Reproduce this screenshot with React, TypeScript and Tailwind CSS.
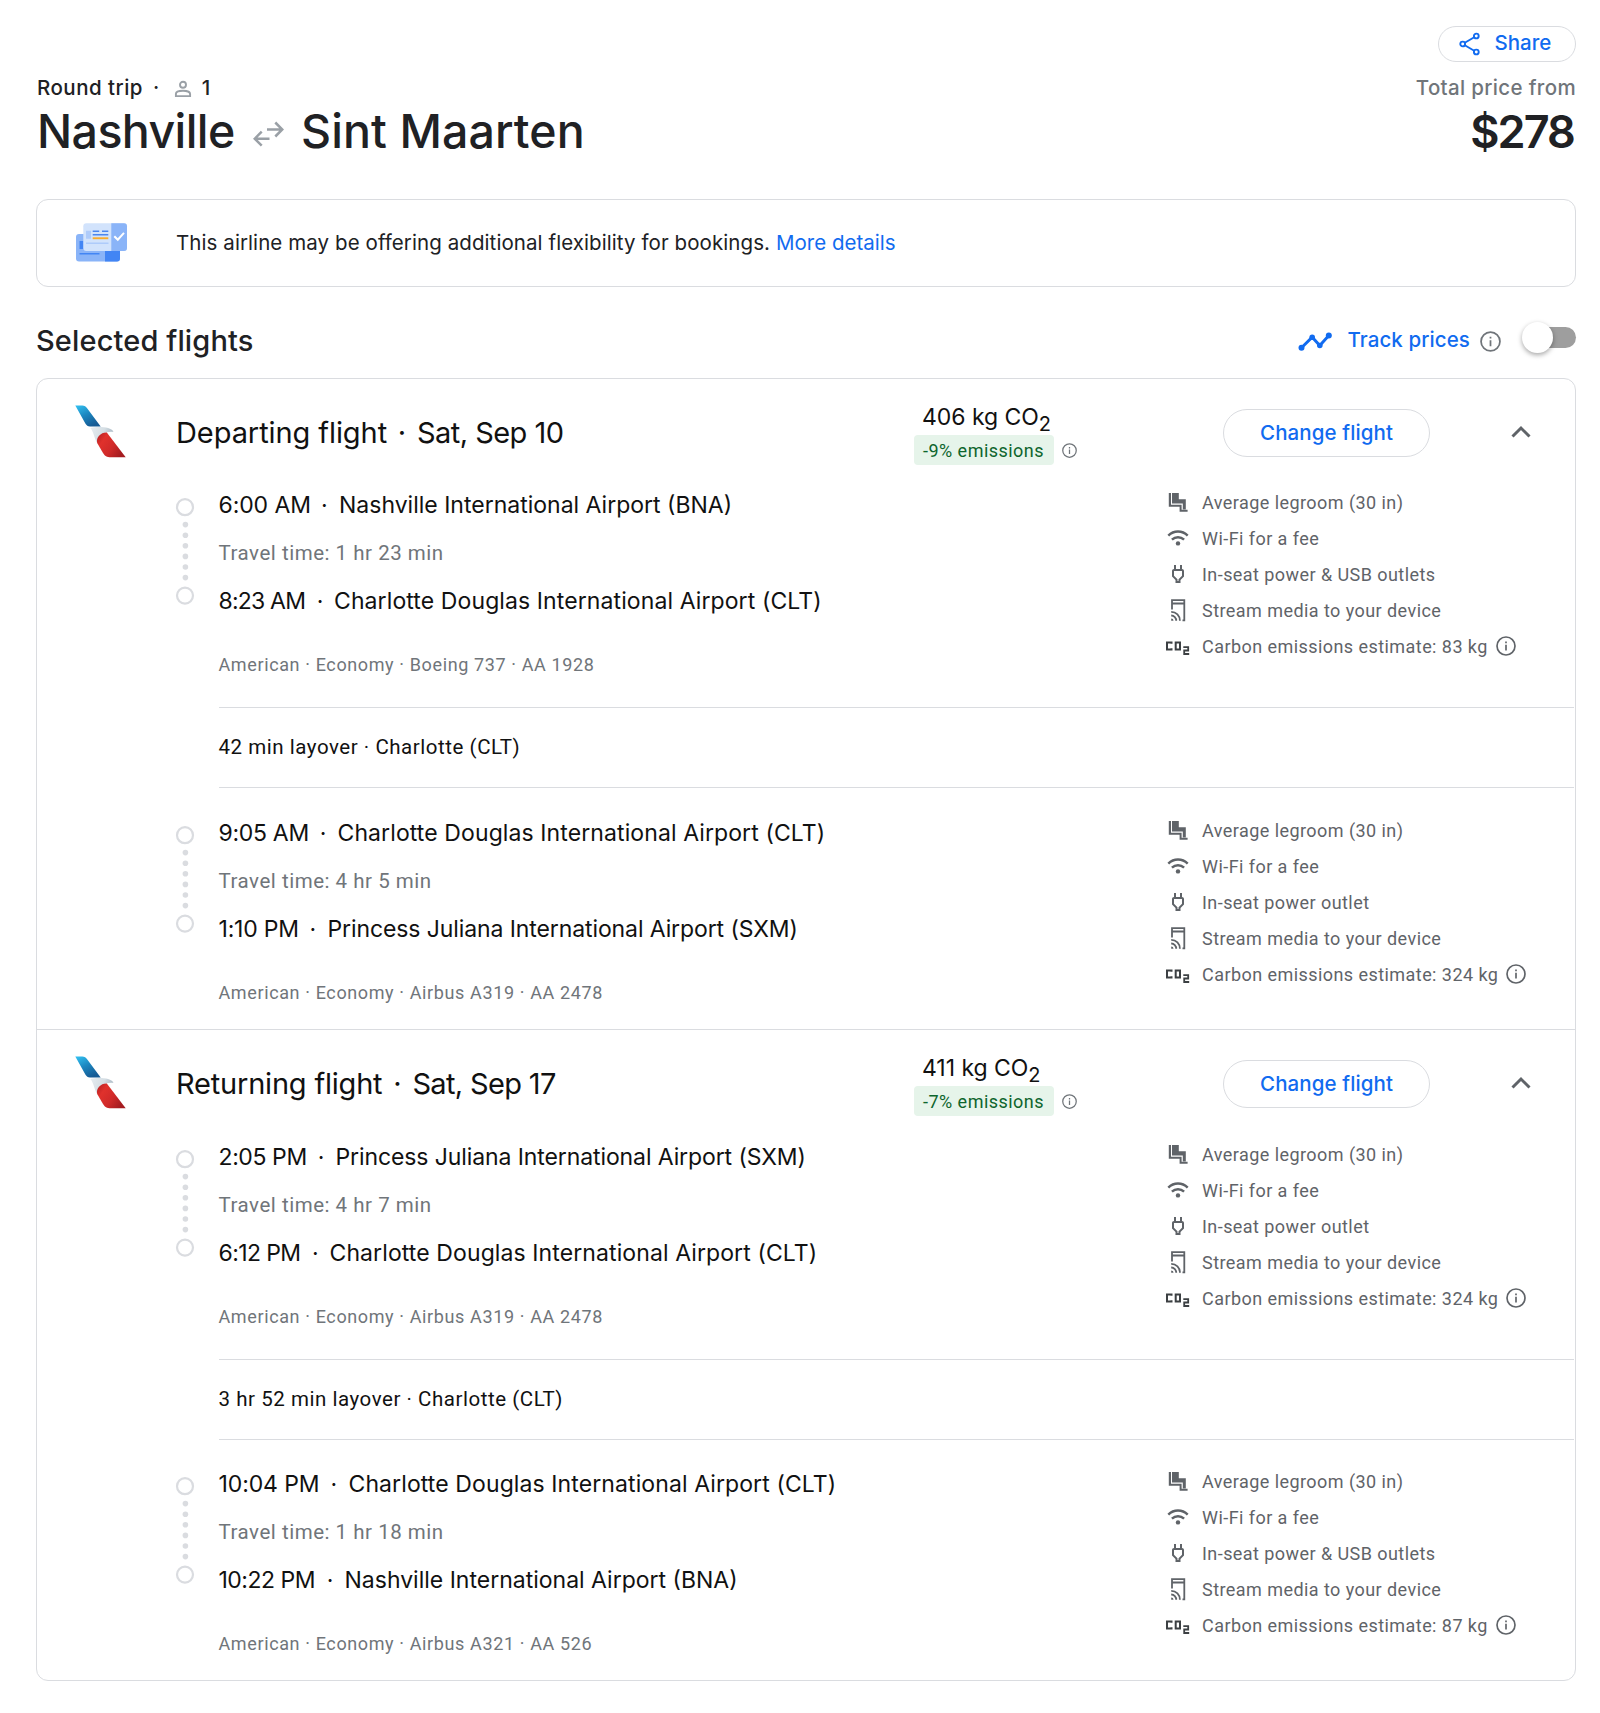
import React from 'react';

type Leg = {
  dep: string;
  depW: string;
  from: string;
  fromT: string;
  travel: string;
  arr: string;
  arrW: string;
  to: string;
  toT: string;
  plane: string;
  outlet: string;
  carbon: string;
  box: string;
};

type Trip = { title: string; titleT: string; date: string; dateT: string; co2: string; diff: string; layover: string; legs: Leg[] };

const BNA = 'Nashville International Airport (BNA)';
const CLT = 'Charlotte Douglas International Airport (CLT)';
const SXM = 'Princess Juliana International Airport (SXM)';
const T_BNA = 'tracking-[0px]';
const T_CLT = 'tracking-[0.1px]';
const T_SXM = 'tracking-[-0.1px]';

const trips: Trip[] = [
  {
    title: 'Departing flight',
    titleT: 'tracking-[-0.08px]',
    date: 'Sat, Sep 10',
    dateT: 'tracking-[-0.55px]',
    co2: '406 kg CO',
    diff: '-9% emissions',
    layover: '42 min layover · Charlotte (CLT)',
    legs: [
      { dep: '6:00 AM', depW: 'w-[120.5px] tracking-[-0.1px]', from: BNA, fromT: T_BNA, travel: 'Travel time: 1 hr 23 min', arr: '8:23 AM', arrW: 'w-[115.5px] tracking-[-0.8px]', to: CLT, toT: T_CLT, plane: 'American · Economy · Boeing 737 · AA 1928', outlet: 'In-seat power & USB outlets', carbon: 'Carbon emissions estimate: 83 kg', box: 'h-[222px]' },
      { dep: '9:05 AM', depW: 'w-[119px] tracking-[-0.3px]', from: CLT, fromT: T_CLT, travel: 'Travel time: 4 hr 5 min', arr: '1:10 PM', arrW: 'w-[109px] tracking-[-0.2px]', to: SXM, toT: T_SXM, plane: 'American · Economy · Airbus A319 · AA 2478', outlet: 'In-seat power outlet', carbon: 'Carbon emissions estimate: 324 kg', box: 'h-[241px] pt-[25px]' },
    ],
  },
  {
    title: 'Returning flight',
    titleT: 'tracking-[-0.2px]',
    date: 'Sat, Sep 17',
    dateT: 'tracking-[-0.65px]',
    co2: '411 kg CO',
    diff: '-7% emissions',
    layover: '3 hr 52 min layover · Charlotte (CLT)',
    legs: [
      { dep: '2:05 PM', depW: 'w-[117px] tracking-[-0.4px]', from: SXM, fromT: T_SXM, travel: 'Travel time: 4 hr 7 min', arr: '6:12 PM', arrW: 'w-[111px] tracking-[-0.6px]', to: CLT, toT: T_CLT, plane: 'American · Economy · Airbus A319 · AA 2478', outlet: 'In-seat power outlet', carbon: 'Carbon emissions estimate: 324 kg', box: 'h-[223px] pt-px' },
      { dep: '10:04 PM', depW: 'w-[130px] tracking-[-0.1px]', from: CLT, fromT: T_CLT, travel: 'Travel time: 1 hr 18 min', arr: '10:22 PM', arrW: 'w-[126px] tracking-[-0.5px]', to: BNA, toT: T_BNA, plane: 'American · Economy · Airbus A321 · AA 526', outlet: 'In-seat power & USB outlets', carbon: 'Carbon emissions estimate: 87 kg', box: 'h-[240px] pt-[24px]' },
    ],
  },
];

function Info({ className }: { className: string }) {
  return (
    <svg viewBox="0 0 24 24" fill="none" className={className}>
      <circle cx="12" cy="12" r="10.8" stroke="currentColor" strokeWidth="2" />
      <path d="M11 10.5h2v7h-2zM11 6.5h2v2.2h-2z" fill="currentColor" />
    </svg>
  );
}

function AirlineLogo() {
  return (
    <svg width="52" height="54" viewBox="0 0 52 54">
      <defs>
        <linearGradient id="tailBlue" x1="0" y1="0" x2="0.6" y2="1">
          <stop offset="0" stopColor="#33c3f3" />
          <stop offset="0.5" stopColor="#1c87c0" />
          <stop offset="1" stopColor="#155a94" />
        </linearGradient>
        <linearGradient id="tailRed" x1="0" y1="0" x2="1" y2="0.6">
          <stop offset="0" stopColor="#b01d22" />
          <stop offset="0.3" stopColor="#e0312c" />
          <stop offset="0.65" stopColor="#d02a29" />
          <stop offset="1" stopColor="#a51c20" />
        </linearGradient>
        <linearGradient id="tailGrey" x1="0" y1="0" x2="1" y2="0.3">
          <stop offset="0" stopColor="#e6ecf0" />
          <stop offset="0.6" stopColor="#d5dee4" />
          <stop offset="1" stopColor="#a9b9c4" />
        </linearGradient>
      </defs>
      <path d="M.3 .4H7.2C9.6 .4 11 1.4 12.3 3.4L25.7 21.6H15C12.8 21.6 11.5 20.4 10.5 18.8L.3 .4Z" fill="url(#tailBlue)" />
      <path d="M15.3 23C22 21.400 36 21.400 38.500 26.800C33 26.300 29 27.500 26 30.500C23.500 33 22.600 35 22.500 38.500C19 33 18.500 26 15.3 23Z" fill="url(#tailGrey)" />
      <path d="M22.2 38C20.6 32.500 26 27.300 31.800 27.600L50.7 52.2H36C31.5 52.2 30 51 28 48L22.2 38Z" fill="url(#tailRed)" />
    </svg>
  );
}

function TicketArt() {
  return (
    <svg width="54" height="44" viewBox="0 0 54 44">
      <rect x="1" y="13" width="44" height="27.5" rx="3" fill="#8ab4f8" />
      <path d="M30 25H45V37.5a3 3 0 0 1-3 3H30Z" fill="#4285f4" />
      <path d="M4.5 20h4v8h-4zM4.5 32h20v1.4h-20z" fill="#4285f4" />
      <rect x="8.3" y="2.3" width="43.7" height="27.7" rx="3" fill="#d2e3fc" />
      <path d="M36.3 2.3H49a3 3 0 0 1 3 3V27a3 3 0 0 1-3 3H36.3Z" fill="#8ab4f8" />
      <path d="M11 9.8h5v8h-5zM11 21.5h22.5v1.4H11z" fill="#aecbfa" />
      <path d="M17.7 9.6h6.5V11h-6.5zM27 9.6h6.3V11H27zM17.7 13h15.6v1.5H17.7z" fill="#4c86ee" />
      <path d="M17.7 16.3h15.6v1.9H17.7z" fill="#f9ab2d" />
      <path d="M39.3 15.2 42.8 18.7 49 11.8" fill="none" stroke="#fff" strokeWidth="2" />
    </svg>
  );
}

function SeatIcon() {
  return (
    <svg width="24" height="24" viewBox="0 0 24 24" fill="#5f6368">
      <path d="M6 3h6.800v6.300h7v10.200h-3V13.500H6Z" />
      <path d="M2.800 3h2.200v11.700h10.600v5.100h6v2H13.600V16.700H2.800Z" />
    </svg>
  );
}

function WifiIcon() {
  return (
    <svg width="24" height="24" viewBox="0 0 24 24" fill="none" stroke="#5f6368" strokeWidth="2.5">
      <path d="M2.3 9.7C7.9 4.2 16.1 4.2 21.7 9.7" />
      <path d="M5.9 13.7C9.5 10.3 14.5 10.3 18.1 13.7" />
      <circle cx="12" cy="17.4" r="2.2" fill="#5f6368" stroke="none" />
    </svg>
  );
}

function PlugIcon() {
  return (
    <svg width="24" height="24" viewBox="0 0 24 24" fill="#5f6368">
      <path d="M16 9v4.66l-3.5 3.51V19h-1v-1.83L8 13.65V9h8m0-6h-2v4h-4V3H8v4h-.01C6.9 6.99 6 7.89 6 8.99v5.49L9.5 18v3h5v-3l3.5-3.51V9c0-1.1-.9-2-2-2V3z" />
    </svg>
  );
}

function StreamIcon() {
  return (
    <svg width="24" height="24" viewBox="0 0 24 24" fill="none" stroke="#5f6368" strokeWidth="1.8">
      <path d="M6 11.5V2.2H18.3V22.3H16.5M6 5.5H18.3" />
      <path d="M5.2 13.8A8.7 8.7 0 0 1 13.9 22.8M5.2 17.5A5 5 0 0 1 10.2 22.8" />
      <path d="M5.2 20.5A2.3 2.3 0 0 1 7.5 22.8H5.2Z" fill="#5f6368" stroke="none" />
    </svg>
  );
}

function Co2Icon() {
  return (
    <svg width="24" height="24" viewBox="0 0 24 24" fill="none" stroke="#3c4043" strokeWidth="2">
      <path d="M5.500 9.8V8.5H1V15.5H5.500V14.2" />
      <path d="M9.7 8.5H14V15.5H9.7Z" />
      <path d="M17.300 13.2H22.2V16.5H18.2V20H23.2" strokeWidth="1.8" />
    </svg>
  );
}

function Amenity({ icon, children }: { icon: React.ReactNode; children: React.ReactNode }) {
  return (
    <li className="flex h-9 items-center gap-3 whitespace-nowrap font-[Roboto,sans-serif] text-[18px] tracking-[0.44px] text-[#5f6368]">
      {icon}
      {children}
    </li>
  );
}

function Stop({ time, width, place, track }: { time: string; width: string; place: string; track: string }) {
  return (
    <div className="flex items-center whitespace-nowrap text-[23px] text-[#111]">
      <span className={`flex justify-between pr-[11.5px] ${width}`}>
        <span>{time}</span>
        <span>·</span>
      </span>
      <span className={track}>{place}</span>
    </div>
  );
}

function LegRow({ leg }: { leg: Leg }) {
  return (
    <div className={`flex pl-[138px] ${leg.box}`}>
      <svg width="20" height="112" viewBox="0 0 20 112" fill="none" className="mt-3 shrink-0">
        <circle cx="10" cy="10.2" r="8" stroke="#dadce0" strokeWidth="2.2" />
        {[0, 1, 2, 3, 4, 5].map((i) => (
          <circle key={i} cx="10.4" cy={27.6 + i * 10.6} r="2.8" fill="#dadce0" />
        ))}
        <circle cx="10" cy="98.6" r="8" stroke="#dadce0" strokeWidth="2.2" />
      </svg>
      <div className="ml-[23.5px] flex-1">
        <div className="flex h-[41px] items-center">
          <Stop time={leg.dep} width={leg.depW} place={leg.from} track={leg.fromT} />
        </div>
        <div className="flex h-[55px] items-center font-[Roboto,sans-serif] text-[20.5px] tracking-[0.52px] text-[#70757a]">{leg.travel}</div>
        <div className="flex h-[41px] items-center">
          <Stop time={leg.arr} width={leg.arrW} place={leg.to} track={leg.toT} />
        </div>
        <div className="mt-[30px] flex h-[25px] items-center font-[Roboto,sans-serif] text-[18px] tracking-[0.62px] text-[#70757a]">{leg.plane}</div>
      </div>
      <ul className="-mt-px w-[409px] shrink-0">
        <Amenity icon={<SeatIcon />}>Average legroom (30 in)</Amenity>
        <Amenity icon={<WifiIcon />}>Wi-Fi for a fee</Amenity>
        <Amenity icon={<PlugIcon />}>{leg.outlet}</Amenity>
        <Amenity icon={<StreamIcon />}>Stream media to your device</Amenity>
        <Amenity icon={<Co2Icon />}>
          <span className="-mr-1">{leg.carbon}</span>
          <Info className="size-5 overflow-visible" />
        </Amenity>
      </ul>
    </div>
  );
}

function TripSection({ trip, last }: { trip: Trip; last: boolean }) {
  return (
    <section className={last ? '' : 'border-b border-[#dadce0]'}>
      <div className="flex h-[106px] items-center">
        <div className="w-[139px] shrink-0 pl-[38px]">
          <AirlineLogo />
        </div>
        <h3 className="flex w-[738px] shrink-0 whitespace-nowrap pt-px text-[29px] text-[#111]">
          <span className={trip.titleT}>{trip.title}</span>
          <span className="w-[30px] text-center">·</span>
          <span className={trip.dateT}>{trip.date}</span>
        </h3>
        <div className="w-[309px] shrink-0 self-start pt-5">
          <div className="flex h-9 items-center pl-2 text-[23px] tracking-[-0.05px] text-[#111]">
            {trip.co2}
            <span className="mt-3.5 text-[20px]">2</span>
          </div>
          <div className="flex items-center gap-2">
            <span className="flex h-[30px] w-[140px] items-center rounded bg-[#e6f4ea] pl-[9px] font-[Roboto,sans-serif] text-[18px] tracking-[0.47px] text-[#0d652d]">{trip.diff}</span>
            <Info className="size-[15px] overflow-visible text-[#70757a]" />
          </div>
        </div>
        <button className="mt-px h-12 w-[207px] shrink-0 rounded-full border border-[#dadce0] pt-px text-[20.5px] font-medium tracking-[0.1px] text-[#116bf0]">Change flight</button>
        <svg width="24" height="24" viewBox="0 0 24 24" fill="none" stroke="#5f6368" strokeWidth="3" className="ml-[79px]">
          <path d="M3.5 16.5 12 8 20.5 16.5" />
        </svg>
      </div>
      <LegRow leg={trip.legs[0]} />
      <div className="ml-[181.5px] mr-px flex h-[81px] items-center border-y border-[#dadce0] font-[Roboto,sans-serif] text-[20.5px] tracking-[0.54px] text-[#111]">{trip.layover}</div>
      <LegRow leg={trip.legs[1]} />
    </section>
  );
}

export default function App() {
  return (
    <main className="min-h-[1713px] bg-white pl-9 pr-6 font-[Inter,sans-serif] text-[#202124]">
      <div className="h-[199px] w-[1540px] pt-[26px]">
        <header className="flex justify-between">
          <div className="pt-[47px] pl-px">
            <div className="flex h-[30px] items-center text-[20.5px] font-medium tracking-[0.48px]">
              Round trip
              <span className="ml-[10px]">·</span>
              <svg width="18" height="18" viewBox="0 0 18 18" fill="none" stroke="#9aa0a6" strokeWidth="1.9" className="ml-[14px] mt-0.5">
                <circle cx="9" cy="4.7" r="3" />
                <path d="M1.9 16.1V14C1.9 9.7 16.1 9.7 16.1 14V16.1Z" />
              </svg>
              <span className="ml-[10px]">1</span>
            </div>
            <h1 className="flex h-[58px] items-center whitespace-nowrap text-[46.5px] font-medium">
              <span className="w-[216px] tracking-[-0.6px]">Nashville</span>
              <svg width="31" height="26" viewBox="0 0 31 26" fill="none" stroke="#9aa0a6" strokeWidth="2.5" className="mt-1 mr-[17px]">
                <path d="M14 8.5H29M22.3 1.5 29.3 8.5 22.3 15.5M16.5 17.7H2M8.7 10.7 1.7 17.7 8.7 24.7" />
              </svg>
              <span className="tracking-[0.1px]">Sint Maarten</span>
            </h1>
          </div>
          <div className="flex flex-col items-end">
            <button className="flex h-9 w-[138.5px] items-center rounded-full border border-[#dadce0] pl-5 text-[20.5px] font-medium text-[#116bf0]">
              <svg width="24" height="24" viewBox="0 0 24 24" fill="none" stroke="#116bf0" strokeWidth="1.9" className="mr-3">
                <circle cx="17.3" cy="4" r="2.4" />
                <circle cx="17.3" cy="20" r="2.4" />
                <circle cx="3.7" cy="12" r="2.4" />
                <path d="M15.2 5.2 5.8 10.8M15.2 18.8 5.8 13.2" />
              </svg>
              <span className="pb-0.5">Share</span>
            </button>
            <div className="mt-[11px] flex h-[30px] items-center text-[20.5px] font-medium tracking-[0.34px] text-[#70757a]">Total price from</div>
            <div className="mr-[2px] flex h-[58px] items-center text-[45px] font-semibold tracking-[-1.9px]">$278</div>
          </div>
        </header>
      </div>

      <div className="flex h-[88px] w-[1540px] items-center rounded-xl border border-[#dadce0] pl-[38px] text-[20.5px]">
        <TicketArt />
        <p className="ml-[47px] flex gap-[6px] whitespace-nowrap tracking-[0.08px]">
          This airline may be offering additional flexibility for bookings.
          <a className="tracking-normal text-[#116bf0]">More details</a>
        </p>
      </div>

      <div className="flex h-[91px] w-[1540px] items-center justify-between pt-4">
        <h2 className="text-[29px] font-medium tracking-[0.13px]">Selected flights</h2>
        <div className="flex items-center text-[#116bf0]">
          <svg width="34" height="22" viewBox="0 0 34 22" fill="#116bf0" className="mr-[15px]">
            <path d="M3.5 17.8 14.2 7.2 21.8 15.5 30.8 5.5" fill="none" stroke="#116bf0" strokeWidth="2.9" />
            <circle cx="3.5" cy="17.8" r="3" />
            <circle cx="14.2" cy="7.2" r="2.8" />
            <circle cx="21.8" cy="15.5" r="2.8" />
            <circle cx="30.8" cy="5.5" r="3" />
          </svg>
          <span className="text-[20.5px] font-medium tracking-[0.1px]">Track prices</span>
          <Info className="ml-[10px] mt-0.5 size-[21px] overflow-visible text-[#70757a]" />
          <span className="relative ml-[34px] mb-1.5 h-[21px] w-[41px] rounded-full bg-[#9e9e9e]">
            <span className="absolute -left-[13px] -top-[5px] size-[31px] rounded-full bg-white shadow-[0_2px_5px_rgba(0,0,0,0.35)]" />
          </span>
        </div>
      </div>

      <div className="w-[1540px] rounded-xl border border-[#dadce0]">
        {trips.map((trip, i) => (
          <TripSection key={trip.title} trip={trip} last={i === trips.length - 1} />
        ))}
      </div>
    </main>
  );
}
